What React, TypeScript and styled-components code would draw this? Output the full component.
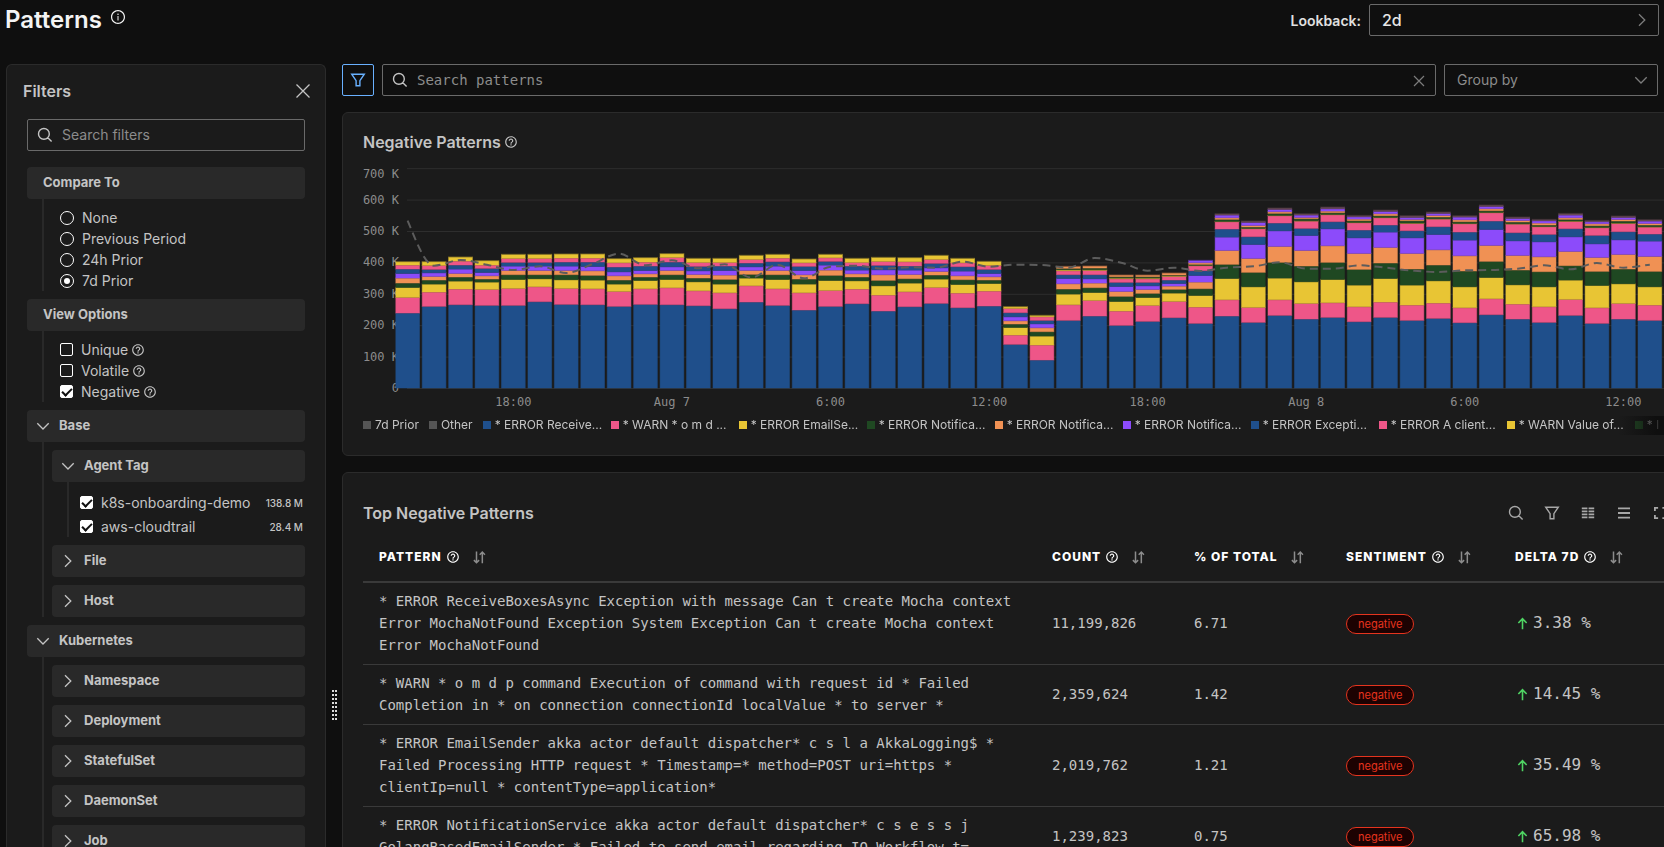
import React from "react";
import styled, { createGlobalStyle, css } from "styled-components";
import { AiOutlineInfoCircle } from "react-icons/ai";
import { MdHelpOutline } from "react-icons/md";

const sans = `Inter, "Liberation Sans", sans-serif`;
const mono = `"DejaVu Sans Mono", "Liberation Mono", monospace`;

const color = {
  page: "#0f0f0f",
  panel: "#1b1b1b",
  bar: "#292929",
  line: "#2b2b2b",
  control: "#6a6a6a",
  text: "#c4c4c4",
  muted: "#8c8c8c",
  accent: "#69b1ff",
};

const GlobalStyle = createGlobalStyle`
  * { box-sizing: border-box; }
  body { margin: 0; background: ${color.page}; color: ${color.text}; font-family: ${sans}; font-size: 14px; }
  button, input, select { font: inherit; color: inherit; }
  svg { display: block; flex: none; }
`;

/* ---------- page frame ---------- */

const Page = styled.div`
  display: flex;
  flex-direction: column;
  height: 100vh;
  overflow: hidden;
`;

const Header = styled.header`
  display: flex;
  align-items: flex-start;
  justify-content: space-between;
  height: 64px;
  flex: none;
  padding: 4px 5px 0 5px;
`;

const TitleGroup = styled.div`
  display: flex;
  gap: 8px;
  color: #f4f4f4;
  svg { margin-top: 5px; }
`;

const PageTitle = styled.h1`
  margin: 0;
  font-size: 24px;
  line-height: 32px;
  font-weight: 600;
`;

const Lookback = styled.label`
  display: flex;
  align-items: center;
  gap: 8px;
  color: #e0e0e0;
  font-weight: 600;
`;

const SelectBox = styled.span<{ $width: number }>`
  display: grid;
  align-items: center;
  width: ${(p) => p.$width}px;
  height: 32px;
  color: #7c7c7c;
  > * { grid-area: 1 / 1; }
  svg { justify-self: end; margin-right: 9px; pointer-events: none; }
`;

const Select = styled.select<{ $bright?: boolean }>`
  appearance: none;
  width: 100%;
  height: 32px;
  padding: 0 12px 1px;
  border: 1px solid ${color.control};
  border-radius: 2px;
  background: transparent;
  color: ${(p) => (p.$bright ? "#e6e6e6" : color.muted)};
  font-size: ${(p) => (p.$bright ? 16 : 14)}px;
  font-weight: ${(p) => (p.$bright ? 500 : 400)};
`;

const Body = styled.div`
  display: flex;
  flex: 1;
  min-height: 0;
  padding-left: 6px;
`;

/* ---------- sidebar ---------- */

const Sidebar = styled.aside`
  display: flex;
  flex-direction: column;
  width: 320px;
  flex: none;
  overflow: hidden;
  padding: 14px 20px 0;
  border: 1px solid ${color.line};
  border-bottom: 0;
  border-radius: 6px 6px 0 0;
  background: ${color.panel};
`;

const SidebarHead = styled.div`
  display: flex;
  align-items: center;
  justify-content: space-between;
  height: 24px;
  margin: 0 -12px 16px -4px;
`;

const Heading = styled.h2`
  display: flex;
  align-items: center;
  gap: 3px;
  margin: 0;
  font-size: 16px;
  line-height: 24px;
  font-weight: 600;
`;

const IconButton = styled.button<{ $dim?: boolean }>`
  display: grid;
  place-items: center;
  width: 28px;
  height: 24px;
  padding: ${(p) => (p.$dim ? "2px 0 0" : "0")};
  border: 0;
  background: none;
  color: ${(p) => (p.$dim ? "#7c7c7c" : "inherit")};
  cursor: pointer;
`;

const SearchBox = styled.label<{ $mono?: boolean }>`
  display: flex;
  align-items: center;
  gap: 9px;
  height: 32px;
  flex: ${(p) => (p.$mono ? "1" : "none")};
  padding: 0 2px 0 9px;
  border: 1px solid ${color.control};
  border-radius: 2px;
  font-family: ${(p) => (p.$mono ? mono : sans)};
`;

const SearchInput = styled.input`
  flex: 1;
  min-width: 0;
  height: 28px;
  padding: 0 0 1px;
  border: 0;
  outline: 0;
  background: none;
  &::placeholder { color: ${color.muted}; opacity: 1; }
`;

const Tree = styled.div`
  display: flex;
  flex-direction: column;
  gap: 8px;
  margin-top: 16px;
`;

const barStyle = css`
  display: flex;
  align-items: center;
  gap: 8px;
  width: 100%;
  height: 32px;
  border: 0;
  border-radius: 4px;
  background: ${color.bar};
  font-size: 13px;
  font-weight: 700;
  text-align: left;
`;

const GroupTitle = styled.h3`
  ${barStyle}
  margin: 0;
  padding: 0 16px 2px;
`;

const GroupToggle = styled.button`
  ${barStyle}
  padding: 0 8px 2px;
  cursor: pointer;
  svg { margin-top: 2px; }
`;

const Branch = styled.div`
  margin-left: 15px;
  border-left: 2px solid ${color.bar};
`;

const OptionList = styled(Branch)`
  padding: 8px 0 0 16px;
`;

const SubTree = styled(Branch)`
  display: flex;
  flex-direction: column;
  gap: 8px;
  padding: 8px 0 0 8px;
`;

const TagList = styled(Branch)`
  display: flex;
  flex-direction: column;
  gap: 3px;
  padding: 10px 2px 0 11px;
`;

const Option = styled.label`
  display: flex;
  align-items: center;
  gap: 8px;
  height: 21px;
  svg { margin-left: -5px; }
`;

const TagCount = styled.span`
  margin-left: auto;
  font-size: 10px;
  font-weight: 500;
`;

const Radio = styled.input.attrs({ type: "radio" })`
  appearance: none;
  display: grid;
  place-items: center;
  width: 14px;
  height: 14px;
  margin: 0;
  border: 1px solid #fff;
  border-radius: 50%;
  &:checked::before {
    content: "";
    width: 6px;
    height: 6px;
    border-radius: 50%;
    background: #fff;
  }
`;

const Checkbox = styled.input.attrs({ type: "checkbox" })`
  appearance: none;
  display: grid;
  place-items: center;
  width: 13px;
  height: 13px;
  margin: 0;
  border: 1px solid #fff;
  border-radius: 2px;
  &:checked { background: #fff; }
  &:checked::before {
    content: "";
    width: 8px;
    height: 4px;
    margin-bottom: 2px;
    border: solid #111;
    border-width: 0 0 2px 2px;
    transform: rotate(-45deg);
  }
`;

const Resizer = styled.div`
  width: 16px;
  flex: none;
  padding: 626px 0 0 6px;
`;

const Grip = styled.svg`
  width: 5px;
  height: 30px;
  fill: #dcdcdc;
`;

/* ---------- main area ---------- */

const Main = styled.main`
  display: flex;
  flex-direction: column;
  gap: 16px;
  flex: 1;
  min-width: 0;
  overflow: hidden;
`;

const Toolbar = styled.div`
  display: flex;
  gap: 8px;
  flex: none;
  padding-right: 6px;
`;

const FilterToggle = styled.button`
  display: grid;
  place-items: center;
  width: 32px;
  height: 32px;
  padding: 0;
  border: 1px solid ${color.accent};
  border-radius: 2px;
  background: none;
  color: ${color.accent};
`;

const Panel = styled.section<{ $top: number }>`
  flex: none;
  margin-right: -35px;
  padding: ${(p) => p.$top}px 20px 20px;
  border: 1px solid ${color.line};
  border-radius: 6px;
  background: ${color.panel};
`;

const Chart = styled.svg`
  width: 100%;
  height: auto;
  text { font-family: ${mono}; font-size: 12px; fill: ${color.muted}; }
`;

const Legend = styled.ul`
  display: flex;
  gap: 10px;
  height: 19px;
  margin: 0;
  padding: 0;
  overflow: hidden;
  list-style: none;
  font-size: 12px;
  line-height: 18px;
  white-space: nowrap;
  mask-image: linear-gradient(to right, #000 calc(100% - 60px), transparent calc(100% - 10px));
`;

const LegendItem = styled.li<{ $clipped: boolean }>`
  display: flex;
  align-items: center;
  gap: 4px;
  flex: none;
  width: ${(p) => (p.$clipped ? "118px" : "auto")};
  padding-bottom: 1px;
`;

const LegendFade = styled.div`
  background: linear-gradient(to right, transparent calc(100% - 60px), ${color.page} calc(100% - 22px));
`;

const Swatch = styled.span<{ $color: string }>`
  flex: none;
  width: 8px;
  height: 8px;
  background: ${(p) => p.$color};
`;

const TableHead = styled.div`
  display: flex;
  align-items: center;
  justify-content: space-between;
  height: 32px;
`;

const Actions = styled.div`
  display: flex;
  color: #a8a8a8;
  ${IconButton} { width: 36px; }
`;

const Table = styled.table`
  width: 100%;
  table-layout: fixed;
  border-collapse: separate;
  border-spacing: 0;
  font-family: ${mono};
  line-height: 22px;
`;

const Col = styled.col<{ $width?: number }>`
  width: ${(p) => (p.$width ? `${p.$width}px` : "auto")};
`;

const Th = styled.th`
  height: 54px;
  padding: 4px 16px 0;
  border-bottom: 2px solid #3a3a3a;
  color: #fff;
  font-family: ${sans};
  font-size: 12px;
  font-weight: 800;
  letter-spacing: 1px;
  text-align: left;
  white-space: nowrap;
`;

const ThContent = styled.span`
  display: flex;
  align-items: center;
  gap: 4px;
`;

const SortButton = styled.button`
  display: grid;
  padding: 0;
  margin-left: 8px;
  border: 0;
  background: none;
  color: ${color.muted};
`;

const Td = styled.td`
  padding: 7px 16px 8px;
  border-bottom: 1px solid #3a3a3a;
`;

const Pill = styled.span`
  display: block;
  width: max-content;
  margin-top: 2px;
  padding: 0 11px;
  border: 1px solid #e6341e;
  border-radius: 10px;
  background: #1c0202;
  color: #e6341e;
  font-family: ${sans};
  font-size: 11px;
  line-height: 18px;
`;

const Delta = styled.span`
  display: flex;
  align-items: center;
  gap: 3px;
  font-size: 16px;
  svg { color: #4fd463; }
`;

/* ---------- chart data ---------- */

const palette = ["#1f4f8b", "#ee5688", "#e8c534", "#1f4822", "#f09154", "#8c4bfa"];
const other = "#6a4a58";
const seriesColor = (i: number) =>
  i === 12 ? other : i < 6 ? palette[i] : palette[i === 6 ? 0 : i === 7 ? 1 : i === 8 ? 2 : i - 6];

// Cumulative top of every segment of an hourly bar, in thirds of a pixel above the axis.
const stacks: number[][] = [
  [225, 272, 302, 315, 330, 344, 357, 369, 379],
  [245, 288, 312, 324, 335, 346, 356, 368, 379],
  [250, 297, 321, 333, 344, 357, 369, 381, 393],
  [248, 296, 318, 327, 337, 347, 359, 369, 382],
  [248, 299, 326, 340, 353, 366, 377, 389, 401],
  [259, 304, 328, 340, 353, 366, 377, 389, 401],
  [251, 299, 325, 340, 353, 366, 378, 390, 402],
  [250, 298, 324, 338, 352, 365, 378, 390, 402],
  [245, 290, 312, 324, 337, 349, 363, 376, 388],
  [251, 298, 323, 333, 343, 353, 366, 378, 391],
  [250, 301, 326, 340, 353, 364, 378, 392, 403],
  [247, 292, 319, 330, 341, 352, 365, 377, 389],
  [238, 286, 312, 326, 339, 353, 366, 377, 389],
  [258, 307, 330, 341, 353, 364, 375, 386, 398],
  [248, 298, 326, 340, 353, 366, 379, 390, 401],
  [234, 286, 312, 327, 340, 353, 365, 376, 387],
  [245, 293, 323, 338, 354, 369, 380, 391, 401],
  [253, 297, 322, 333, 343, 354, 366, 377, 389],
  [231, 279, 307, 323, 340, 355, 368, 380, 392],
  [244, 289, 315, 328, 341, 354, 366, 379, 391],
  [254, 302, 327, 339, 350, 361, 374, 386, 398],
  [241, 285, 311, 325, 337, 351, 364, 376, 389],
  [246, 291, 314, 324, 334, 344, 356, 368, 380],
  [131, 159, 182, 192, 202, 214, 226, 239, 244],
  [84, 129, 156, 169, 181, 193, 203, 214, 218],
  [203, 250, 282, 297, 313, 329, 340, 352, 355, 359, 365],
  [216, 263, 287, 301, 315, 328, 340, 353, 355, 360, 366],
  [188, 231, 260, 275, 290, 305, 317, 328, 330, 334, 339],
  [200, 248, 272, 284, 296, 307, 317, 328, 330, 334, 339],
  [211, 260, 285, 296, 306, 314, 324, 335, 337, 339, 345],
  [194, 243, 278, 298, 318, 338, 352, 367, 368, 371, 376, 383],
  [216, 265, 329, 371, 413, 453, 477, 499, 500, 506, 511, 519, 523],
  [197, 242, 304, 347, 389, 431, 454, 478, 479, 483, 488, 497, 501],
  [218, 265, 330, 377, 425, 472, 495, 517, 518, 524, 529, 536, 540],
  [207, 254, 319, 366, 413, 458, 479, 501, 502, 508, 512, 519, 523],
  [212, 256, 326, 377, 427, 478, 499, 520, 521, 526, 531, 538, 543],
  [199, 244, 309, 356, 404, 451, 474, 496, 497, 502, 507, 514, 518],
  [212, 258, 329, 375, 422, 468, 489, 511, 512, 517, 523, 530, 534],
  [203, 249, 309, 357, 404, 451, 472, 494, 495, 502, 506, 512, 517],
  [209, 255, 322, 369, 415, 461, 484, 507, 508, 513, 518, 524, 528],
  [196, 241, 304, 351, 397, 444, 468, 493, 494, 499, 505, 513, 517],
  [220, 268, 332, 380, 428, 476, 501, 526, 527, 532, 538, 545, 549],
  [207, 252, 310, 354, 398, 442, 466, 492, 493, 498, 503, 509, 513],
  [197, 244, 304, 349, 394, 439, 461, 484, 485, 489, 495, 502, 506],
  [218, 266, 324, 367, 410, 454, 478, 500, 501, 506, 511, 519, 524],
  [194, 241, 308, 350, 392, 433, 458, 481, 482, 487, 493, 499, 503],
  [207, 254, 313, 357, 401, 445, 469, 494, 495, 501, 506, 512, 516],
  [203, 249, 304, 350, 395, 441, 462, 483, 484, 489, 494, 501, 505],
];

const prior = [
  502, 367, 384, 370, 354, 365, 345, 372, 403, 368, 383, 359, 371, 331, 370, 329, 364, 367, 358, 362, 361, 379, 364,
  370, 369, 361, 390, 376, 352, 361, 351, 361, 365, 377, 358, 358, 368, 361, 352, 348, 353, 354, 358, 368, 356, 375,
  361, 370,
];

const BASE = 234;
const STEP = 26.43;
const barX = (i: number) => 32.8 + i * STEP;
const midX = (i: number) => 44.6 + i * STEP;

// Monotone cubic interpolation, so the line never overshoots its points.
function smoothPath(values: number[]): string {
  const y = values.map((v) => BASE - v / 3);
  const slope = y.slice(1).map((v, i) => (v - y[i]) / STEP);
  const tangent = y.map((_, i) => {
    if (i === 0) return slope[0] * 1.4;
    if (i === y.length - 1) return slope[i - 1];
    const a = slope[i - 1];
    const b = slope[i];
    return a * b <= 0 ? 0 : (2 * a * b) / (a + b);
  });
  let d = `M${midX(0)},${y[0]}`;
  for (let i = 1; i < y.length; i++) {
    const h = STEP / 3;
    d += `C${midX(i - 1) + h},${y[i - 1] + tangent[i - 1] * h} ${midX(i) - h},${y[i] - tangent[i] * h} ${midX(i)},${y[i]}`;
  }
  return d;
}

const timeLabels = ["18:00", "Aug 7", "6:00", "12:00", "18:00", "Aug 8", "6:00", "12:00"];

const legend: [string, string][] = [
  ["7d Prior", "#555555"],
  ["Other", "#555555"],
  ["* ERROR Receive...", palette[0]],
  ["* WARN * o m d ...", palette[1]],
  ["* ERROR EmailSe...", palette[2]],
  ["* ERROR Notifica...", palette[3]],
  ["* ERROR Notifica...", palette[4]],
  ["* ERROR Notifica...", palette[5]],
  ["* ERROR Excepti...", palette[0]],
  ["* ERROR A client...", palette[1]],
  ["* WARN Value of...", palette[2]],
  ["* I", palette[3]],
];

const NegativeChart = () => (
  <Chart viewBox="0 0 1315 262" role="img" aria-label="Negative patterns per hour">
    {[0, 1, 2, 3, 4, 5, 6, 7].map((n) => {
      const y = BASE - n * 31.4;
      return (
        <g key={n}>
          <line x1={44} x2={1315} y1={y + 0.5} y2={y + 0.5} stroke="#2e2e2e" />
          <text x={36} y={n === 7 ? y + 10 : y + 4} textAnchor="end">
            {n === 0 ? "0" : `${n}00 K`}
          </text>
        </g>
      );
    })}
    {stacks.map((tops, i) =>
      tops.map((top, j) => {
        const y = BASE - top / 3;
        const height = (top - (j ? tops[j - 1] : 0)) / 3;
        return (
          <g key={`${i}-${j}`}>
            <rect x={barX(i)} y={y} width={23.7} height={height} fill={seriesColor(j)} stroke={seriesColor(j)} strokeOpacity={0.5} />
            <line x1={barX(i)} x2={barX(i) + 23.7} y1={y} y2={y} stroke="#1b1b1b" strokeOpacity={0.4} />
          </g>
        );
      })
    )}
    <path d={smoothPath(prior)} fill="none" stroke="#5c5c5c" strokeWidth={2} strokeDasharray="8 5" />
    {timeLabels.map((label, i) => (
      <text key={i} x={midX(4 + i * 6)} y={252} textAnchor="middle">
        {label}
      </text>
    ))}
  </Chart>
);

/* ---------- icons ---------- */

const Glyph = ({ d, size = 16, weight = 1.3 }: { d: string; size?: number; weight?: number }) => (
  <svg width={size} height={size} viewBox="0 0 16 16" fill="none" stroke="currentColor" strokeWidth={weight} aria-hidden="true">
    <path d={d} />
  </svg>
);

const ChevronDown = () => <Glyph d="M2.3 5.2 8 11l5.7-5.8" />;
const ChevronRight = () => <Glyph d="M5 2.3 10.8 8 5 13.7" />;
const SearchIcon = () => <Glyph weight={1.4} d="M12.3 6.9a5.4 5.4 0 1 1-10.8 0 5.4 5.4 0 0 1 10.8 0zM10.8 10.8l3.8 3.8" />;
const CloseIcon = () => <Glyph d="M1.5 1.5l13 13M14.5 1.5l-13 13" />;
const ClearIcon = () => <Glyph d="M3 3l10 10M13 3 3 13" weight={1.2} />;
const FilterIcon = () => <Glyph d="M1.7 2.2h12.6L9.9 8.6v5.1H6.1V8.6z" weight={1.4} />;
const ArrowUpIcon = () => <Glyph size={15} d="M8 14V2.8M3.6 7.4 8 2.8l4.4 4.6" weight={1.7} />;
const SortIcon = () => <Glyph size={15} weight={1.6} d="M4.8 1.5v11.8M2 10.8l2.8 2.8 2.8-2.8M11 14V2.4M8.2 5 11 2.2 13.8 5" />;
const ColumnsIcon = () => (
  <Glyph weight={1.7} d="M1.8 3.4h5.6M1.8 6.4h5.6M1.8 9.4h5.6M1.8 12.4h5.6M8.6 3.4h5.6M8.6 6.4h5.6M8.6 9.4h5.6M8.6 12.4h5.6" />
);
const DensityIcon = () => <Glyph weight={1.8} d="M2 3.4h12M2 8h12M2 12.6h12" />;
const FullscreenIcon = () => <Glyph weight={1.8} d="M2.9 6V2.9h3.2M10.4 2.9h3.2V6M13.6 10v3.1h-3.2M6.1 13.1H2.9V10" />;

/* ---------- table data ---------- */

const columns = [
  { name: "PATTERN", help: true },
  { name: "COUNT", help: true },
  { name: "% OF TOTAL", help: false },
  { name: "SENTIMENT", help: true },
  { name: "DELTA 7D", help: true },
];

const rows = [
  {
    pattern:
      "* ERROR ReceiveBoxesAsync Exception with message Can t create Mocha context Error MochaNotFound Exception System Exception Can t create Mocha context Error MochaNotFound",
    count: "11,199,826",
    share: "6.71",
    delta: "3.38 %",
  },
  {
    pattern:
      "* WARN * o m d p command Execution of command with request id * Failed Completion in * on connection connectionId localValue * to server *",
    count: "2,359,624",
    share: "1.42",
    delta: "14.45 %",
  },
  {
    pattern:
      "* ERROR EmailSender akka actor default dispatcher* c s l a AkkaLogging$ * Failed Processing HTTP request * Timestamp=* method=POST uri=https * clientIp=null * contentType=application*",
    count: "2,019,762",
    share: "1.21",
    delta: "35.49 %",
  },
  {
    pattern:
      "* ERROR NotificationService akka actor default dispatcher* c s e s s j GolangBasedEmailSender * Failed to send email regarding IO Workflow t=",
    count: "1,239,823",
    share: "0.75",
    delta: "65.98 %",
  },
];

const Toggle = ({ name, open }: { name: string; open?: boolean }) => (
  <GroupToggle aria-expanded={!!open}>
    {open ? <ChevronDown /> : <ChevronRight />}
    {name}
  </GroupToggle>
);

const Filters = () => (
  <Sidebar>
    <SidebarHead>
      <Heading>Filters</Heading>
      <IconButton aria-label="Close filters">
        <CloseIcon />
      </IconButton>
    </SidebarHead>
    <SearchBox>
      <SearchIcon />
      <SearchInput placeholder="Search filters" aria-label="Search filters" />
    </SearchBox>
    <Tree>
      <div>
        <GroupTitle>Compare To</GroupTitle>
        <OptionList>
          {["None", "Previous Period", "24h Prior", "7d Prior"].map((name) => (
            <Option key={name}>
              <Radio name="compare" defaultChecked={name === "7d Prior"} />
              {name}
            </Option>
          ))}
        </OptionList>
      </div>
      <div>
        <GroupTitle>View Options</GroupTitle>
        <OptionList>
          {["Unique", "Volatile", "Negative"].map((name) => (
            <Option key={name}>
              <Checkbox defaultChecked={name === "Negative"} />
              {name}
              <MdHelpOutline size={14} />
            </Option>
          ))}
        </OptionList>
      </div>
      <div>
        <Toggle name="Base" open />
        <SubTree>
          <div>
            <Toggle name="Agent Tag" open />
            <TagList>
              <Option>
                <Checkbox defaultChecked />
                k8s-onboarding-demo
                <TagCount>138.8 M</TagCount>
              </Option>
              <Option>
                <Checkbox defaultChecked />
                aws-cloudtrail
                <TagCount>28.4 M</TagCount>
              </Option>
            </TagList>
          </div>
          <Toggle name="File" />
          <Toggle name="Host" />
        </SubTree>
      </div>
      <div>
        <Toggle name="Kubernetes" open />
        <SubTree>
          {["Namespace", "Deployment", "StatefulSet", "DaemonSet", "Job"].map((name) => (
            <Toggle key={name} name={name} />
          ))}
        </SubTree>
      </div>
    </Tree>
  </Sidebar>
);

export default function App() {
  return (
    <>
      <GlobalStyle />
      <Page>
        <Header>
          <TitleGroup>
            <PageTitle>Patterns</PageTitle>
            <AiOutlineInfoCircle size={16} />
          </TitleGroup>
          <Lookback>
            Lookback:
            <SelectBox $width={290}>
              <Select $bright defaultValue="2d">
                <option>2d</option>
              </Select>
              <ChevronRight />
            </SelectBox>
          </Lookback>
        </Header>
        <Body>
          <Filters />
          <Resizer role="separator" aria-label="Resize filters">
            <Grip viewBox="0 0 5 30">
              {[0, 4, 8, 12, 16, 20, 24, 28].map((y) => (
                <path key={y} d={`M0 ${y}h2v2H0zM3 ${y}h2v2H3z`} />
              ))}
            </Grip>
          </Resizer>
          <Main>
            <Toolbar>
              <FilterToggle aria-label="Toggle filters">
                <FilterIcon />
              </FilterToggle>
              <SearchBox $mono>
                <SearchIcon />
                <SearchInput placeholder="Search patterns" aria-label="Search patterns" />
                <IconButton $dim aria-label="Clear search">
                  <ClearIcon />
                </IconButton>
              </SearchBox>
              <SelectBox $width={214}>
                <Select aria-label="Group by" defaultValue="Group by">
                  <option>Group by</option>
                </Select>
                <ChevronDown />
              </SelectBox>
            </Toolbar>

            <Panel $top={17}>
              <Heading>
                Negative Patterns
                <MdHelpOutline size={14} />
              </Heading>
              <NegativeChart />
              <LegendFade>
                <Legend>
                  {legend.map(([name, fill], i) => (
                    <LegendItem key={i} $clipped={i > 1 && i < 11}>
                      <Swatch $color={fill} />
                      {name}
                    </LegendItem>
                  ))}
                </Legend>
              </LegendFade>
            </Panel>

            <Panel $top={24}>
              <TableHead>
                <Heading>Top Negative Patterns</Heading>
                <Actions>
                  <IconButton aria-label="Search">
                    <SearchIcon />
                  </IconButton>
                  <IconButton aria-label="Filter">
                    <FilterIcon />
                  </IconButton>
                  <IconButton aria-label="Columns">
                    <ColumnsIcon />
                  </IconButton>
                  <IconButton aria-label="Density">
                    <DensityIcon />
                  </IconButton>
                  <IconButton aria-label="Full screen">
                    <FullscreenIcon />
                  </IconButton>
                </Actions>
              </TableHead>
              <Table>
                <colgroup>
                  <Col />
                  <Col $width={142} />
                  <Col $width={152} />
                  <Col $width={169} />
                  <Col $width={179} />
                </colgroup>
                <thead>
                  <tr>
                    {columns.map((c) => (
                      <Th key={c.name}>
                        <ThContent>
                          {c.name}
                          {c.help && <MdHelpOutline size={14} />}
                          <SortButton aria-label={`Sort by ${c.name}`}>
                            <SortIcon />
                          </SortButton>
                        </ThContent>
                      </Th>
                    ))}
                  </tr>
                </thead>
                <tbody>
                  {rows.map((r) => (
                    <tr key={r.count}>
                      <Td>{r.pattern}</Td>
                      <Td>{r.count}</Td>
                      <Td>{r.share}</Td>
                      <Td>
                        <Pill>negative</Pill>
                      </Td>
                      <Td>
                        <Delta>
                          <ArrowUpIcon />
                          {r.delta}
                        </Delta>
                      </Td>
                    </tr>
                  ))}
                </tbody>
              </Table>
            </Panel>
          </Main>
        </Body>
      </Page>
    </>
  );
}
